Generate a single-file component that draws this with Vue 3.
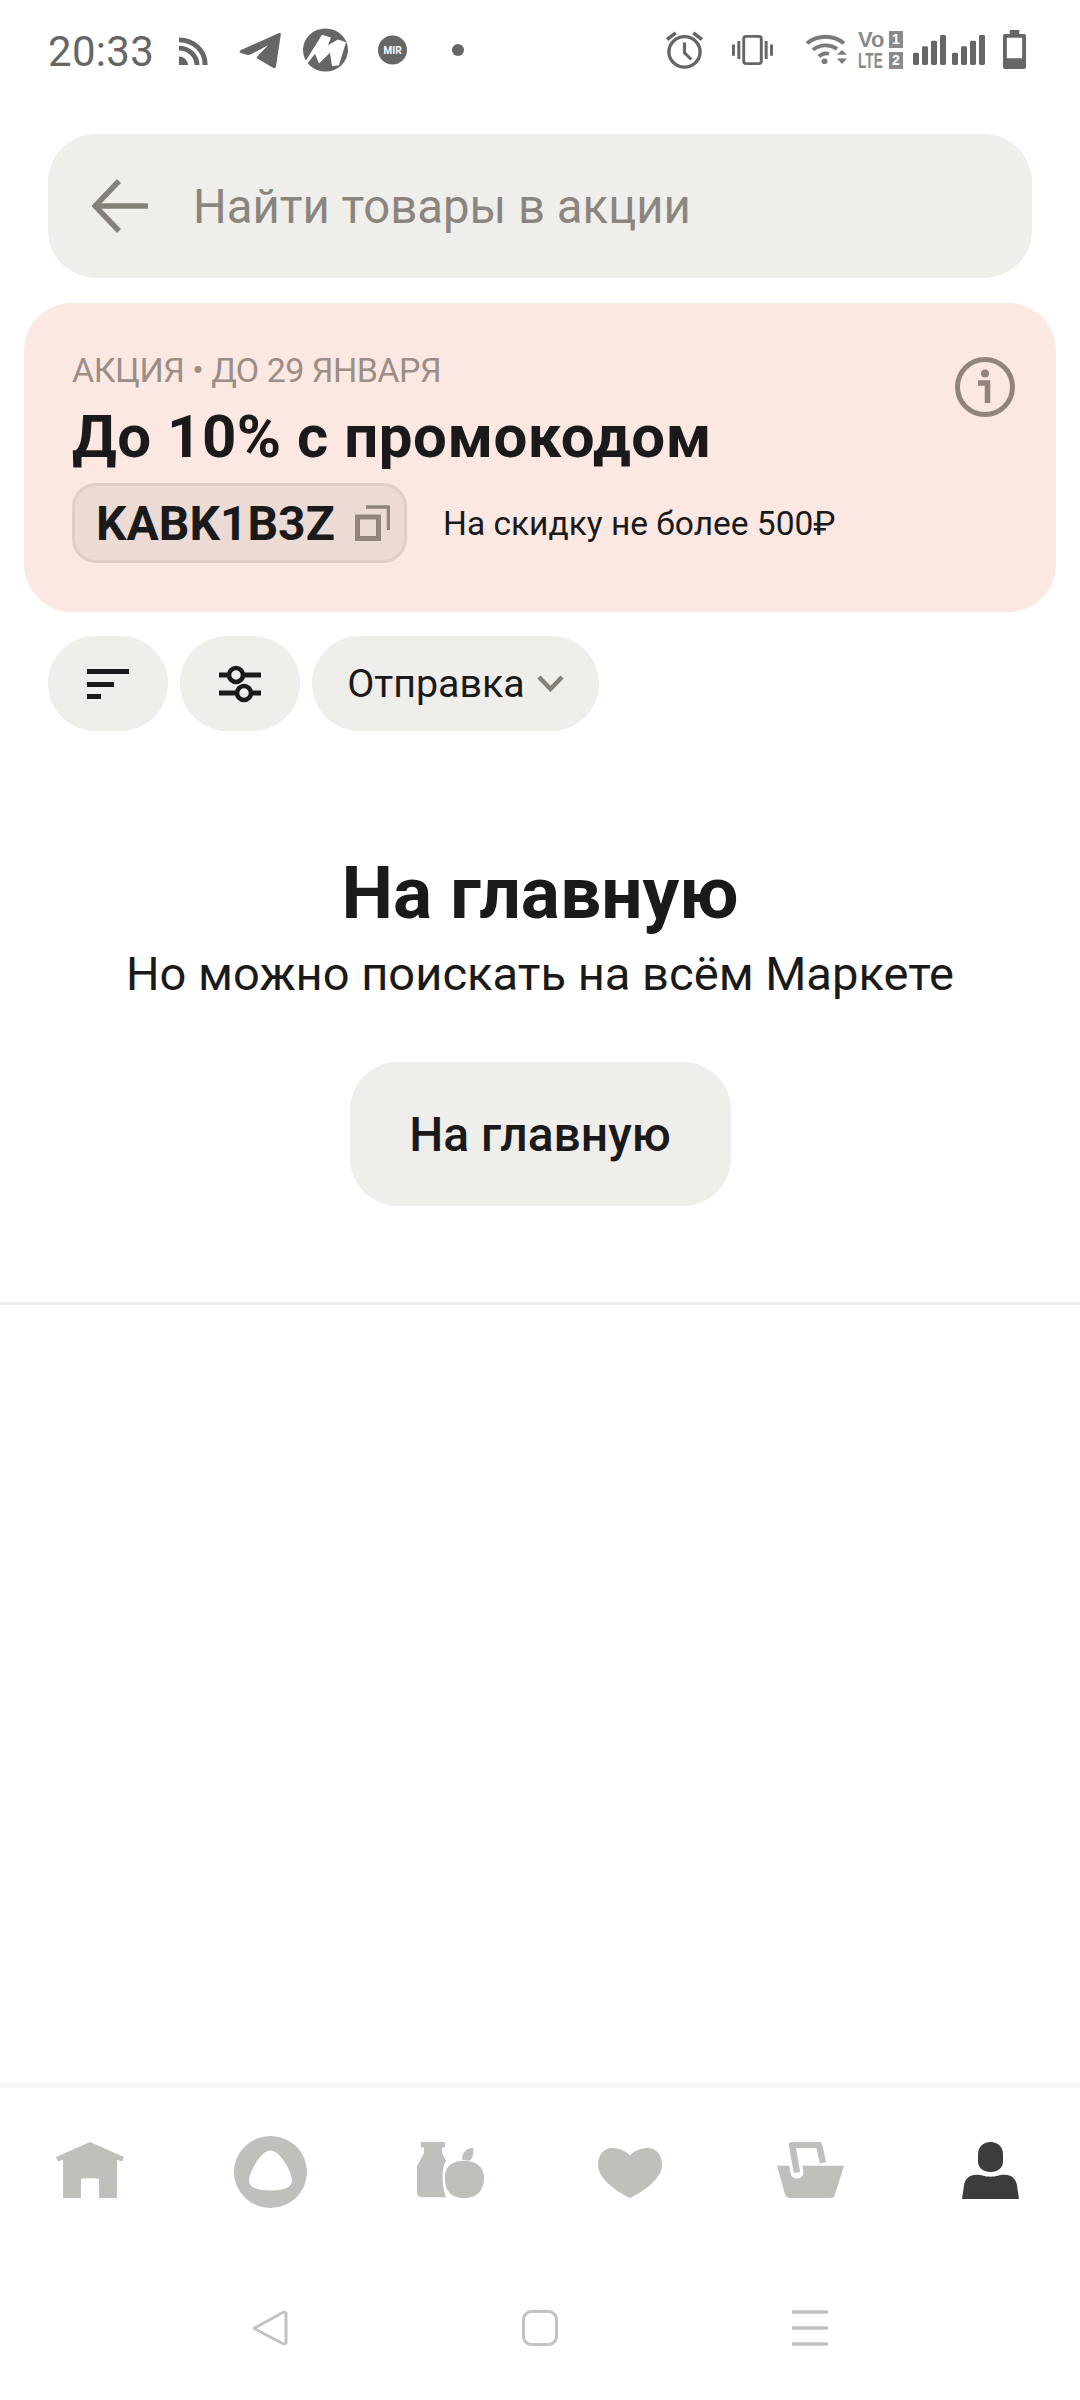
<script setup>
const tabs = ['home', 'alice', 'food', 'heart', 'basket', 'person']
</script>

<template>
  <div class="page">
    <div class="status">
      <span class="time">20:33</span>
      <svg class="ic-rss" width="29" height="28" viewBox="0 0 29 30" preserveAspectRatio="none">
        <path d="M0 21a9 9 0 0 1 9 9H0z" fill="#666" />
        <path d="M0 12a18 18 0 0 1 18 18" fill="none" stroke="#666" stroke-width="5" />
        <path d="M0 3a26 26 0 0 1 26 27" fill="none" stroke="#666" stroke-width="5" />
      </svg>
      <svg class="ic-tg" width="42" height="36" viewBox="0 0 42 38" preserveAspectRatio="none">
        <path d="M40 0c1.500-.5 2 .3 1.800 1.500L37 35c-.3 2-1.500 2.500-3 1.700L19 27.500c-1.500-1-1.500-2 0-3.500L29 13 12 22.500c-1.500.8-3 1-4.500.5L2 21c-2-.7-2-2 0-3z" fill="#666" />
      </svg>
      <svg class="ic-m" width="45" height="44" viewBox="0 0 45 46" preserveAspectRatio="none">
        <circle cx="22.500" cy="23" r="22.500" fill="#666" />
        <path d="M3 34 19 7l9 3-3 8 10-6 8 3-7 24-7 1-2-14-11 11-4-10-9 12z" fill="#fff" />
      </svg>
      <svg class="ic-mir" width="29" height="36" viewBox="0 0 29 36">
        <circle cx="14.500" cy="18" r="14.500" fill="#666" />
        <text x="14.500" y="21.500" text-anchor="middle" class="mir-t">MIR</text>
      </svg>
      <span class="dot"></span>
      <span class="grow"></span>
      <svg class="ic-alarm" width="37" height="38" viewBox="0 0 38 40" preserveAspectRatio="none">
        <circle cx="19" cy="22" r="16" fill="none" stroke="#666" stroke-width="3.500" />
        <path d="M19 12v11l7 7" fill="none" stroke="#666" stroke-width="3.200" />
        <path d="M1 9 10 2M37 9 28 2" stroke="#666" stroke-width="3.600" />
      </svg>
      <svg class="ic-vib" width="41" height="30" viewBox="0 0 42 32" preserveAspectRatio="none">
        <rect x="12" y="1.500" width="18" height="29" rx="2.500" fill="none" stroke="#666" stroke-width="3" />
        <path d="M1.500 10v12M7 6.500v19M35 6.500v19M40.500 10v12" stroke="#666" stroke-width="3" />
      </svg>
      <svg class="ic-wifi" width="43" height="34" viewBox="0 0 43 36" preserveAspectRatio="none">
        <path d="M2 12a28 28 0 0 1 37 0M8 19a19 19 0 0 1 24-1M14 26a10 10 0 0 1 10-3" fill="none" stroke="#7a7a7a" stroke-width="4" />
        <circle cx="19.500" cy="31" r="3" fill="#7a7a7a" />
        <path d="M32 24l5-5 5 5zM32 28l5 6 5-6z" fill="#7a7a7a" />
      </svg>
      <div class="volte">
        <div class="v-txt">Vo</div>
        <div class="v-box">1</div>
        <div class="v-txt"><span class="v-lte">LTE</span></div>
        <div class="v-box">2</div>
      </div>
      <svg class="ic-sig" width="72" height="30" viewBox="0 0 72 32" preserveAspectRatio="none">
        <rect x="0" y="19" width="6" height="13" rx="1.500" fill="#666" />
        <rect x="9" y="12" width="6" height="20" rx="1.500" fill="#666" />
        <rect x="18" y="6" width="6" height="26" rx="1.500" fill="#666" />
        <rect x="27" y="0" width="6" height="32" rx="1.500" fill="#666" />
        <rect x="39" y="19" width="6" height="13" rx="1.500" fill="#666" />
        <rect x="48" y="12" width="6" height="20" rx="1.500" fill="#666" />
        <rect x="57" y="6" width="6" height="26" rx="1.500" fill="#666" />
        <rect x="66" y="0" width="6" height="32" rx="1.500" fill="#666" />
      </svg>
      <svg class="ic-bat" width="23" height="39" viewBox="0 0 24 40" preserveAspectRatio="none">
        <path d="M7 0h10v4h5a2 2 0 0 1 2 2v32a2 2 0 0 1-2 2H2a2 2 0 0 1-2-2V6a2 2 0 0 1 2-2h5zM4 8v21h16V8z" fill="#666" fill-rule="evenodd" />
      </svg>
    </div>

    <div class="search">
      <svg width="56" height="54" viewBox="0 0 56 54">
        <path d="M27 2 3 27l24 25M3 27h53" fill="none" stroke="#85817a" stroke-width="5.500" />
      </svg>
      <span class="search-txt">Найти товары в акции</span>
    </div>

    <div class="promo">
      <div class="promo-label">АКЦИЯ • ДО 29 ЯНВАРЯ</div>
      <div class="promo-title">До 10% с промокодом</div>
      <div class="promo-row">
        <div class="code">
          <span>KABK1B3Z</span>
          <svg width="35" height="36" viewBox="0 0 35 36">
            <rect x="2.500" y="12" width="21" height="21.500" fill="none" stroke="#8f857d" stroke-width="5" />
            <path d="M11 2h22.500v23" fill="none" stroke="#8f857d" stroke-width="3.500" />
          </svg>
        </div>
        <span class="limit">На скидку не более 500₽</span>
      </div>
      <svg class="info" width="60" height="60" viewBox="0 0 60 60">
        <circle cx="30" cy="30" r="27.500" fill="none" stroke="#8f857d" stroke-width="5" />
        <circle cx="30" cy="16.500" r="4" fill="#8f857d" />
        <path d="M23 26h9.500v20" fill="none" stroke="#8f857d" stroke-width="5.500" />
      </svg>
    </div>

    <div class="chips">
      <div class="chip chip-ic">
        <svg width="42" height="30" viewBox="0 0 42 30">
          <path d="M0 2.500h42M0 15.500h27M0 27.500h14" stroke="#1a1a1a" stroke-width="5" />
        </svg>
      </div>
      <div class="chip chip-ic">
        <svg width="42" height="38" viewBox="0 0 42 38">
          <path d="M0 10h42M0 28h42" stroke="#1a1a1a" stroke-width="5" />
          <circle cx="17" cy="10" r="7" fill="#efeeeb" stroke="#1a1a1a" stroke-width="4.500" />
          <circle cx="25" cy="28" r="7" fill="#efeeeb" stroke="#1a1a1a" stroke-width="4.500" />
        </svg>
      </div>
      <div class="chip chip-text">
        <span>Отправка</span>
        <svg width="27" height="17" viewBox="0 0 27 17">
          <path d="M2 2l11.500 12L25 2" fill="none" stroke="#85817a" stroke-width="4.500" />
        </svg>
      </div>
    </div>

    <div class="empty">
      <h1>На главную</h1>
      <p>Но можно поискать на всём Маркете</p>
      <button type="button">На главную</button>
    </div>
    <div class="divider"></div>

    <div class="spacer"></div>

    <nav class="tabs">
      <div v-for="t in tabs" :key="t" class="tab">
        <svg v-if="t === 'home'" width="68" height="58" viewBox="0 0 68 62" preserveAspectRatio="none">
          <path d="M34 1 68 17l-2 5-5-2v41H43V41c0-1.500-18-1.500-18 0v20H7V20l-5 2-2-5z" fill="#c1bfbb" />
        </svg>
        <svg v-else-if="t === 'alice'" class="alice" width="73" height="72" viewBox="0 0 73 74" preserveAspectRatio="none">
          <path d="M36.500 0a36.500 37 0 1 1 0 74 36.500 37 0 0 1 0-74zm0 15C27 15 15 37 15 46c0 8 11 10 21.500 10S58 54 58 46c0-9-12-31-21.500-31z" fill="#c1bfbb" fill-rule="evenodd" />
        </svg>
        <svg v-else-if="t === 'food'" width="67" height="57" viewBox="0 0 67 61" preserveAspectRatio="none">
          <path d="M4 0h24v6h-3v6l4 8c-4 6-5 24 0 39H5c-3 0-5-2-5-5V26l7-14V6H4z" fill="#c1bfbb" />
          <path d="M28 36c0-10 8-16 19-16s20 6 20 18c0 14-7 22-20 22s-19-8-19-20z" fill="#c1bfbb" />
          <path d="M45 19c0-8 5-12 11-13 1 6 0 12-4 14z" fill="#c1bfbb" />
        </svg>
        <svg v-else-if="t === 'heart'" width="64" height="51" viewBox="0 0 64 54" preserveAspectRatio="none">
          <path d="M32 8C27 2 20 0 14 0 6 0 0 7 0 18c0 15 20 29 32 35 12-6 32-20 32-35C64 7 58 0 50 0 44 0 37 2 32 8z" fill="#c1bfbb" />
        </svg>
        <svg v-else-if="t === 'basket'" width="67" height="57" viewBox="0 0 67 60" preserveAspectRatio="none">
          <path d="M0 25h67l-9 30c0 3-2 4-5 4H14c-3 0-5-1-6-4z" fill="#c1bfbb" />
          <path d="M20 32l-2-12" fill="none" stroke="#fff" stroke-width="13" stroke-linecap="round" />
          <path d="M20 32 15 3h27l4 19" fill="none" stroke="#c1bfbb" stroke-width="6.500" stroke-linejoin="round" />
        </svg>
        <svg v-else width="57" height="57" viewBox="0 0 57 59" preserveAspectRatio="none">
          <path d="M28.500 0C36 0 41 5 41 13v7c0 7-5 11-12.500 11S16 27 16 20v-7C16 5 21 0 28.500 0z" fill="#3d3c3a" />
          <path d="M0 59l2-14c1-7 6-11 12-11s8 2 14.500 2S37 34 43 34s11 4 12 11l2 14z" fill="#3d3c3a" />
        </svg>
      </div>
    </nav>

    <div class="sysnav">
      <div class="sys">
        <svg width="36" height="36" viewBox="0 0 36 38" preserveAspectRatio="none">
          <path d="M2.500 19 31 2.500c1.500-.8 3 0 3 1.500v30c0 1.500-1.500 2.300-3 1.500L2.500 19.800z" fill="none" stroke="#c2c2c2" stroke-width="3" stroke-linejoin="round" />
        </svg>
      </div>
      <div class="sys">
        <svg width="36" height="36" viewBox="0 0 36 36">
          <rect x="1.500" y="1.500" width="33" height="33" rx="8" fill="none" stroke="#c2c2c2" stroke-width="3" />
        </svg>
      </div>
      <div class="sys">
        <svg width="36" height="36" viewBox="0 0 36 36">
          <path d="M0 2h36M0 18h36M0 34h36" stroke="#c2c2c2" stroke-width="3.500" />
        </svg>
      </div>
    </div>
  </div>
</template>

<style scoped>
.page {
  width: 1080px;
  height: 2400px;
  display: flex;
  flex-direction: column;
  background: #fff;
  color: #1a1a1a;
  font-family: Roboto, "Noto Sans", sans-serif;
  overflow: hidden;
}

.status {
  height: 100px;
  flex: none;
  display: flex;
  align-items: center;
  padding: 0 54px 0 48px;
}
.time {
  font-size: 42px;
  color: #666;
  width: 131px;
  letter-spacing: 0.3px;
  margin-top: 2px;
}
.grow { flex: 1; }
.ic-rss { margin-top: 2px; }
.ic-tg { margin-left: 31px; margin-top: 2px; }
.ic-m { margin-left: 22px; }
.ic-mir { margin-left: 30px; }
.dot {
  width: 12px;
  height: 12px;
  border-radius: 50%;
  background: #666;
  margin-left: 45px;
}
.ic-vib { margin-left: 29px; }
.ic-wifi { margin-left: 32px; margin-top: -2px; }
.ic-sig { margin-left: 10px; }
.ic-bat { margin-left: 18px; margin-top: -1px; }
.mir-t {
  font: 700 10px Roboto, sans-serif;
  fill: #fff;
}
.volte {
  margin-left: 10px;
  width: 45px;
  display: grid;
  grid-template-columns: 31px 14px;
  grid-auto-rows: 17px;
  row-gap: 4px;
  font-family: "Liberation Sans", sans-serif;
  font-weight: 700;
}
.v-txt {
  width: 31px;
  line-height: 17px;
  font-size: 22px;
  color: #8a8a8a;
  white-space: nowrap;
}
.v-lte {
  display: inline-block;
  transform: scaleX(0.62);
  transform-origin: left center;
}
.v-box {
  background: #8a8a8a;
  color: #fff;
  font-size: 14px;
  line-height: 17px;
  text-align: center;
}

.search {
  margin: 34px 48px 0;
  height: 144px;
  flex: none;
  border-radius: 48px;
  background: #efeeeb;
  display: flex;
  align-items: center;
  padding-left: 44px;
  gap: 45px;
  color: #8a867f;
  font-size: 47.3px;
}
.search-txt { margin-top: 2px; }

.promo {
  position: relative;
  margin: 25px 24px 0;
  height: 309px;
  flex: none;
  box-sizing: border-box;
  padding: 49px 48px 0;
  border-radius: 48px;
  background: #fbe8e3;
}
.promo-label {
  font-size: 34px;
  line-height: 36px;
  color: #9a8e87;
  letter-spacing: -0.5px;
}
.promo-title {
  margin-top: 16px;
  font-size: 60px;
  line-height: 66px;
  font-weight: 700;
  letter-spacing: 0.5px;
}
.promo-row {
  margin-top: 13px;
  display: flex;
  align-items: center;
  gap: 36px;
}
.code {
  width: 335px;
  height: 80px;
  box-sizing: border-box;
  border: 3px solid #e0cfc8;
  border-radius: 24px;
  background: #ecdbd4;
  display: flex;
  align-items: center;
  padding-left: 21px;
  gap: 20px;
  font-size: 48px;
  font-weight: 700;
}
.limit { font-size: 33.500px; }
.info {
  position: absolute;
  top: 54px;
  right: 41px;
}

.chips {
  margin: 24px 0 0 48px;
  display: flex;
  gap: 12px;
  flex: none;
}
.chip {
  height: 95px;
  border-radius: 48px;
  background: #efeeeb;
  display: flex;
  align-items: center;
  justify-content: center;
}
.chip-ic { width: 120px; }
.chip-text {
  width: 287px;
  gap: 12px;
  font-size: 39.4px;
}

.empty {
  flex: none;
  display: flex;
  flex-direction: column;
  align-items: center;
  padding-top: 117px;
}
.empty h1 {
  margin: 0;
  font-size: 73px;
  line-height: 90px;
  font-weight: 700;
}
.empty p {
  margin: 9px 0 0;
  font-size: 47.1px;
  line-height: 54px;
}
.empty button {
  margin-top: 61px;
  width: 381px;
  height: 144px;
  border: none;
  border-radius: 48px;
  background: #efeeeb;
  color: #1a1a1a;
  font-family: inherit;
  font-size: 48px;
  font-weight: 500;
}
.divider {
  margin-top: 96px;
  height: 3px;
  background: #eeeeee;
  flex: none;
}
.spacer { flex: 1; }

.tabs {
  flex: none;
  height: 141px;
  box-sizing: border-box;
  border-top: 5px solid #f5f5f5;
  display: grid;
  grid-template-columns: repeat(6, 180px);
  align-content: start;
}
.tab {
  display: flex;
  justify-content: center;
  align-items: flex-end;
  height: 111px;
}
.alice { margin-bottom: -9px; }
.sysnav {
  flex: none;
  height: 176px;
  box-sizing: border-box;
  padding: 86px 135px 0;
  display: grid;
  grid-template-columns: repeat(3, 270px);
}
.sys {
  display: flex;
  justify-content: center;
}
</style>
